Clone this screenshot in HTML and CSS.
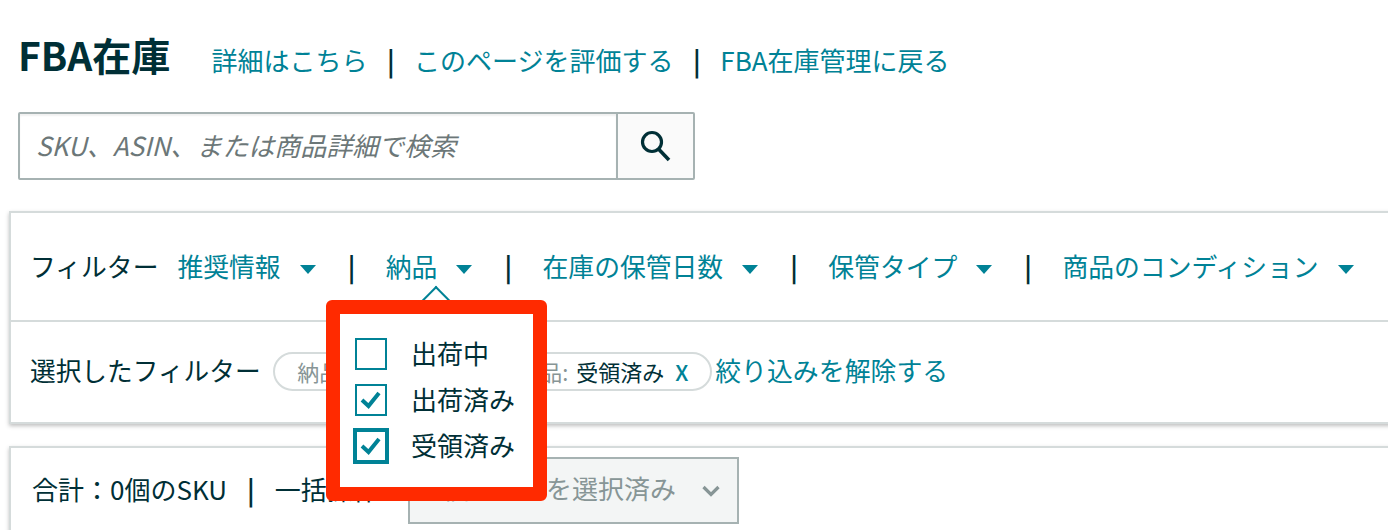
FILE: index.html
```html
<!DOCTYPE html>
<html lang="ja">
<head>
  <meta charset="UTF-8">
  <title>FBA在庫</title>
  <link rel="stylesheet" href="styles.css">
</head>
<body>
  <div class="page">
    <div class="page-head">
      <h1 class="page-title">FBA在庫</h1>
      <a class="link" href="#">詳細はこちら</a>
      <span class="bar">|</span>
      <a class="link" href="#">このページを評価する</a>
      <span class="bar">|</span>
      <a class="link" href="#">FBA在庫管理に戻る</a>
    </div>

    <div class="search">
      <div class="search-input">SKU、ASIN、または商品詳細で検索</div>
      <button class="search-button" aria-label="検索">
        <svg width="32" height="32" viewBox="0 0 32 32" fill="none" stroke="#002f36">
          <circle cx="12" cy="12" r="9.5" stroke-width="3.2"/>
          <path d="M19 19.5 L29 30" stroke-width="3.6"/>
        </svg>
      </button>
    </div>

    <div class="panel filters">
      <div class="filter-row">
        <span class="filter-label">フィルター</span>
        <a class="filter-item" href="#">推奨情報<i class="caret"></i></a>
        <span class="bar">|</span>
        <a class="filter-item" href="#">納品<i class="caret"></i></a>
        <span class="bar">|</span>
        <a class="filter-item" href="#">在庫の保管日数<i class="caret"></i></a>
        <span class="bar">|</span>
        <a class="filter-item" href="#">保管タイプ<i class="caret"></i></a>
        <span class="bar">|</span>
        <a class="filter-item" href="#">商品のコンディション<i class="caret"></i></a>
      </div>
      <div class="selected-row">
        <span class="selected-label">選択したフィルター</span>
        <span class="chip"><span class="chip-key">納品:</span>出荷済み<a class="chip-x" href="#">X</a></span>
        <span class="chip"><span class="chip-key">納品:</span>受領済み<a class="chip-x" href="#">X</a></span>
        <a class="link clear-link" href="#">絞り込みを解除する</a>
      </div>

      <div class="popover-arrow"></div>
      <div class="popover">
        <label class="check-row"><span class="check"></span><span class="check-text">出荷中</span></label>
        <label class="check-row">
          <span class="check">
            <svg width="24" height="20" viewBox="0 0 24 20" fill="none" stroke="#008296" stroke-width="4"><path d="M3 10 L9.500 16 L20 3"/></svg>
          </span><span class="check-text">出荷済み</span>
        </label>
        <label class="check-row">
          <span class="check check-focus">
            <svg width="24" height="20" viewBox="0 0 24 20" fill="none" stroke="#008296" stroke-width="4"><path d="M3 10 L9.500 16 L20 3"/></svg>
          </span><span class="check-text">受領済み</span>
        </label>
      </div>
    </div>

    <div class="panel totals">
      <span>合計：0個のSKU</span>
      <span class="bar">|</span>
      <span class="bulk-label">一括操作：</span>
      <div class="bulk-select">
        <span>0個のSKUを選択済み</span>
        <svg width="18" height="12" viewBox="0 0 18 12" fill="none" stroke="#879596" stroke-width="3.200"><path d="M1.500 2 L9 9.500 L16.500 2"/></svg>
      </div>
    </div>
  </div>
</body>
</html>
```

FILE: styles.css
```css
html, body {
  margin: 0;
  padding: 0;
  height: 530px;
  overflow: hidden;
  background: white;
  font-family: "Noto Sans CJK JP", "Noto Sans", sans-serif;
  color: #002f36;
}

.page {
  padding: 0 0 0 9px;
  font-size: 26px;
  line-height: 36px;
}

a {
  text-decoration: none;
}

.link {
  color: #008296;
}

.bar {
  color: #002f36;
  font-weight: 700;
}

.page-head {
  display: flex;
  align-items: baseline;
  height: 112px;
  padding: 36px 0 0 9px;
  box-sizing: border-box;
}

.page-title {
  margin: 0 41px 0 0;
  font-size: 39px;
  font-weight: 700;
}

.page-head .bar {
  margin: 0 19.500px;
}

.search {
  display: flex;
  width: 677px;
  height: 68px;
  margin-left: 9px;
  box-sizing: border-box;
  border: 2px solid #a6b2b2;
  border-radius: 2px;
}

.search-input {
  flex: 1;
  display: flex;
  align-items: center;
  padding: 0 0 3px 16px;
  font-style: italic;
  color: #6c7778;
  box-shadow: inset 0 2px 2px rgba(0, 0, 0, 0.06);
}

.search-button {
  width: 77px;
  padding: 0;
  display: flex;
  align-items: center;
  justify-content: center;
  background: #fafafa;
  border: none;
  border-left: 2px solid #a6b2b2;
}

.panel {
  box-sizing: border-box;
  margin-right: -30px;
  background: white;
  border: 2px solid #d5dbdb;
  box-shadow: 0 2px 4px rgba(0, 0, 0, 0.25);
}

.filters {
  position: relative;
  margin-top: 31px;
  height: 213px;
}

.filter-row {
  display: flex;
  align-items: center;
  height: 109px;
  padding: 0 0 1px 19px;
  box-sizing: border-box;
  border-bottom: 2px solid #d5dbdb;
  font-size: 25.800px;
}

.filter-label {
  margin-right: 19px;
}

.filter-item {
  display: flex;
  align-items: center;
  color: #008296;
}

.caret {
  width: 0;
  height: 0;
  margin: 7px 0 0 19px;
  border-left: 8.500px solid transparent;
  border-right: 8.500px solid transparent;
  border-top: 9px solid #008296;
}

.filter-row .bar {
  margin: 0 30.500px 0 32px;
}

.selected-row {
  display: flex;
  align-items: center;
  height: 100px;
  padding: 0 0 5px 19px;
  box-sizing: border-box;
  font-size: 25.700px;
}

.selected-label {
  margin-right: 12.500px;
}

.chip {
  display: flex;
  align-items: center;
  width: 218px;
  height: 39px;
  box-sizing: border-box;
  margin: 4px 3px 0 0;
  padding: 0 0 2px 22px;
  border: 2px solid #d5dbdb;
  border-radius: 20px;
  font-size: 22px;
  white-space: nowrap;
}

.chip-key {
  margin-right: 8px;
  color: #879596;
}

.chip-x {
  margin-left: 11px;
  color: #008296;
  font-weight: 500;
}

.clear-link {
  font-size: 25.900px;
}

.popover-arrow {
  position: absolute;
  left: 415px;
  top: 77px;
  width: 18px;
  height: 18px;
  background: white;
  border-top: 2px solid #008296;
  border-left: 2px solid #008296;
  transform: rotate(45deg);
}

.popover {
  position: absolute;
  left: 315px;
  top: 87px;
  width: 221px;
  height: 201px;
  box-sizing: border-box;
  padding: 17px 0 0 15px;
  background: white;
  border: 14px solid #ff2a00;
  border-radius: 6px;
  z-index: 2;
}

.check-row {
  display: flex;
  align-items: center;
  height: 46px;
  white-space: nowrap;
}

.check {
  display: flex;
  align-items: center;
  justify-content: center;
  width: 32px;
  height: 32px;
  box-sizing: border-box;
  margin-right: 24px;
  border: 2px solid #008296;
}

.check-focus {
  outline: 2px solid #008296;
}

.check-text {
  margin-bottom: 3px;
}

.totals {
  display: flex;
  align-items: center;
  margin-top: 22px;
  height: 88px;
  padding-left: 21px;
}

.totals > span {
  margin-bottom: 2px;
}

.totals .bar {
  margin: 0 20px 2px;
}

.bulk-label {
  margin-right: 3px;
}

.bulk-select {
  display: flex;
  align-items: center;
  justify-content: space-between;
  flex: none;
  width: 331px;
  height: 67px;
  box-sizing: border-box;
  padding: 0 17px 4px 19px;
  background: #f3f5f5;
  border: 2px solid #a6b2b2;
  color: #879596;
  white-space: nowrap;
}

.bulk-select svg {
  margin-top: 6px;
}
```
